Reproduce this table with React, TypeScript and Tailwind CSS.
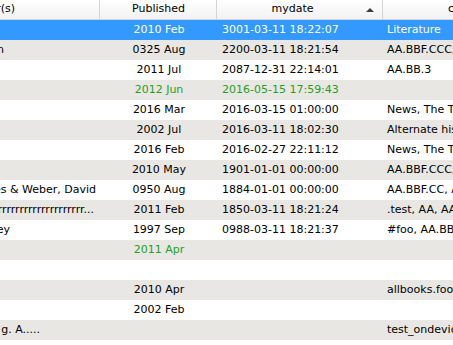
import React from "react";

type Row = {
  author: string;
  authorPad: string;
  published: string;
  mydate: string;
  tags: string;
  green?: boolean;
};

const rows: Row[] = [
  { author: "", authorPad: "pr-1", published: "2010 Feb", mydate: "3001-03-11 18:22:07", tags: "Literature" },
  { author: "Smith, John & Hutchinson", authorPad: "pr-[96px]", published: "0325 Aug", mydate: "2200-03-11 18:21:54", tags: "AA.BBF.CCC, News" },
  { author: "", authorPad: "pr-1", published: "2011 Jul", mydate: "2087-12-31 22:14:01", tags: "AA.BB.3" },
  { author: "", authorPad: "pr-1", published: "2012 Jun", mydate: "2016-05-15 17:59:43", tags: "", green: true },
  { author: "", authorPad: "pr-1", published: "2016 Mar", mydate: "2016-03-15 01:00:00", tags: "News, The Times" },
  { author: "", authorPad: "pr-1", published: "2002 Jul", mydate: "2016-03-11 18:02:30", tags: "Alternate history" },
  { author: "", authorPad: "pr-1", published: "2016 Feb", mydate: "2016-02-27 22:11:12", tags: "News, The Times" },
  { author: "", authorPad: "pr-1", published: "2010 May", mydate: "1901-01-01 00:00:00", tags: "AA.BBF.CCC, News" },
  { author: "Dunn, Jones & Weber, David", authorPad: "pr-[4px]", published: "0950 Aug", mydate: "1884-01-01 00:00:00", tags: "AA.BBF.CC, AA" },
  { author: "rrrrrrrrrrrrrrrrrrrrrrrrrrrrrrrrrrrrrrr...", authorPad: "pr-[6px]", published: "2011 Feb", mydate: "1850-03-11 18:21:24", tags: ".test, AA, AA.BB" },
  { author: "Stanley, Harvey", authorPad: "pr-[90px]", published: "1997 Sep", mydate: "0988-03-11 18:21:37", tags: "#foo, AA.BB" },
  { author: "", authorPad: "pr-1", published: "2011 Apr", mydate: "", tags: "", green: true },
  { author: "", authorPad: "pr-1", published: "", mydate: "", tags: "" },
  { author: "", authorPad: "pr-1", published: "2010 Apr", mydate: "", tags: "allbooks.foo" },
  { author: "", authorPad: "pr-1", published: "2002 Feb", mydate: "", tags: "" },
  { author: "Long, Author g. A.....", authorPad: "pr-[60px]", published: "", mydate: "", tags: "test_ondevice" },
  { author: "", authorPad: "pr-1", published: "", mydate: "", tags: "" },
];

export default function App() {

  return (
    <div
      className="w-[453px] h-[345px] overflow-hidden bg-white text-[11px] text-black"
      style={{ fontFamily: '"DejaVu Sans", Verdana, sans-serif' }}
    >

      {/* header */}
      <div className="flex h-[20px] border-b border-[#d5d5d5] bg-gradient-to-b from-white to-[#f2f2f2]">

        <div className="w-[100px] shrink-0 flex items-center justify-end overflow-hidden whitespace-nowrap border-r border-[#d5d5d5] pr-[84px]">
          Author(s)
        </div>

        <div className="w-[117px] shrink-0 flex items-center justify-center border-r border-[#d5d5d5] pl-[1px]">
          Published
        </div>

        <div className="w-[166px] shrink-0 relative flex items-center justify-center border-r border-[#d5d5d5] pr-[14px]">
          mydate
          <span className="absolute right-[8px] top-[8px] w-0 h-0 border-l-[4px] border-r-[4px] border-b-[4px] border-l-transparent border-r-transparent border-b-[#3c3c3c]" />
        </div>

        <div className="flex-1 flex items-center overflow-hidden whitespace-nowrap pl-[65px]">
          comments
        </div>

      </div>

      {/* rows */}
      {rows.map((row, i) => {

        const selected = i === 0;

        const bg = selected
          ? "bg-[#3399ff] text-white"
          : i % 2 === 1
          ? "bg-[#e9e7e3]"
          : "bg-white";

        const dateColor = selected ? "" : row.green ? "text-[#1fa01f]" : "";

        return (
          <div key={i} className={`flex h-[20px] items-center whitespace-nowrap ${bg}`}>

            <div className="w-[100px] shrink-0 flex justify-end overflow-hidden">
              <span className={row.authorPad}>{row.author}</span>
            </div>

            <div className={`w-[118px] shrink-0 text-center ${dateColor}`}>
              {row.published}
            </div>

            <div className={`w-[166px] shrink-0 pl-[4px] ${dateColor}`}>
              {row.mydate}
            </div>

            <div className="flex-1 overflow-hidden pl-[3px]">
              {row.tags}
            </div>

          </div>
        );
      })}

    </div>
  );
}
